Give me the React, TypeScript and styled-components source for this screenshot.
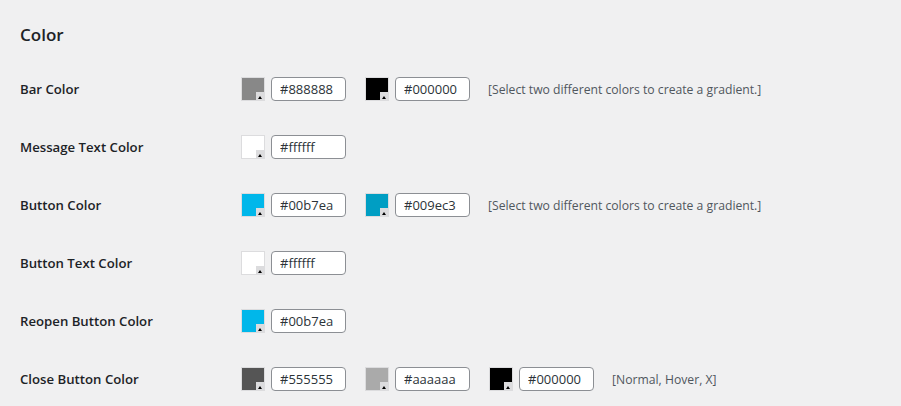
import React from "react";
import styled, { createGlobalStyle } from "styled-components";

const Global = createGlobalStyle`
  html, body { margin: 0; padding: 0; background: #f0f0f1; }
  body { font-family: "Open Sans", "Noto Sans", sans-serif; color: #1d2327; }
`;

const Page = styled.div`
  padding: 24px 20px 0 20px;
`;

const Heading = styled.h2`
  margin: 0 0 14px 0;
  font-size: 17px;
  line-height: 22px;
  font-weight: 600;
  color: #1d2327;
`;

const Row = styled.div`
  display: flex;
  align-items: center;
  height: 58px;
`;

const Label = styled.div`
  width: 221px;
  flex: none;
  font-size: 13.2px;
  font-weight: 600;
  color: #1d2327;
`;

const Controls = styled.div`
  display: flex;
  align-items: center;
  gap: 19px;
`;

const Picker = styled.div`
  display: flex;
  align-items: center;
  gap: 6px;
`;

const Swatch = styled.div<{ $c: string }>`
  position: relative;
  box-sizing: border-box;
  width: 24px;
  height: 24px;
  border: 1px solid #dcdcde;
  background: ${(p) => p.$c};
`;

const Notch = styled.span`
  position: absolute;
  right: -1px;
  bottom: -1px;
  width: 9px;
  height: 9px;
  background: #dcdcde;
  &::after {
    content: "";
    position: absolute;
    left: 2px;
    bottom: 2px;
    border-left: 2.5px solid transparent;
    border-right: 2.5px solid transparent;
    border-bottom: 3px solid #000;
  }
`;

const Input = styled.input`
  box-sizing: border-box;
  width: 75px;
  height: 24px;
  border: 1px solid #8c8f94;
  border-radius: 4px;
  background: #fff;
  padding: 0 8px;
  font-family: "Open Sans", "Noto Sans", sans-serif;
  font-size: 13px;
  color: #2c3338;
  outline: none;
`;

const Note = styled.span`
  margin-left: -1px;
  font-size: 12.2px;
  color: #50575e;
`;

type RowDef = { label: string; colors: string[]; note?: string };

const rows: RowDef[] = [
  { label: "Bar Color", colors: ["#888888", "#000000"], note: "[Select two different colors to create a gradient.]" },
  { label: "Message Text Color", colors: ["#ffffff"] },
  { label: "Button Color", colors: ["#00b7ea", "#009ec3"], note: "[Select two different colors to create a gradient.]" },
  { label: "Button Text Color", colors: ["#ffffff"] },
  { label: "Reopen Button Color", colors: ["#00b7ea"] },
  { label: "Close Button Color", colors: ["#555555", "#aaaaaa", "#000000"], note: "[Normal, Hover, X]" },
];

export default function App() {
  return (
    <>
      <Global />
      <Page>
        <Heading>Color</Heading>
        {rows.map((r) => (
          <Row key={r.label}>
            <Label>{r.label}</Label>
            <Controls>
              {r.colors.map((c, i) => (
                <Picker key={i}>
                  <Swatch $c={c}>
                    <Notch />
                  </Swatch>
                  <Input type="text" defaultValue={c} />
                </Picker>
              ))}
              {r.note && <Note>{r.note}</Note>}
            </Controls>
          </Row>
        ))}
      </Page>
    </>
  );
}
